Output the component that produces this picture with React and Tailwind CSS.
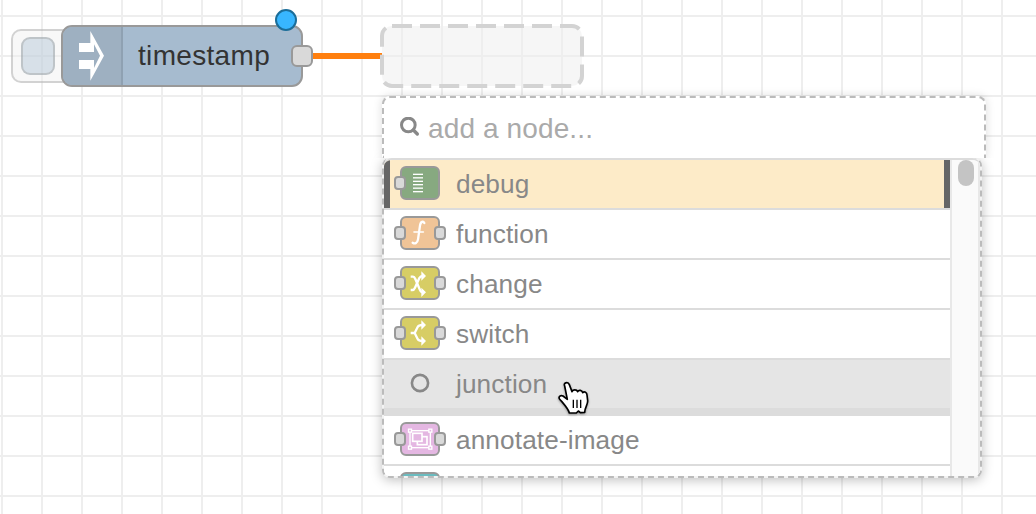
import React from "react";

const rows = [
  { id: "debug", label: "debug", color: "bg-[#87a980]", output: false, tone: "bg-[#fdebc8]", icon: "debug", selected: true },
  { id: "function", label: "function", color: "bg-[#f0c497]", output: true, tone: "bg-white", icon: "function" },
  { id: "change", label: "change", color: "bg-[#d7cd65]", output: true, tone: "bg-white", icon: "change" },
  { id: "switch", label: "switch", color: "bg-[#d7cd65]", output: true, tone: "bg-white", icon: "switch" },
  { id: "junction", label: "junction", tone: "bg-[#e5e5e5]", junction: true },
  { id: "annotate", label: "annotate-image", color: "bg-[#e4b7e2]", output: true, tone: "bg-white", icon: "annotate" },
  { id: "next", label: "", color: "bg-[#6bbcc0]", output: true, tone: "bg-white" },
];

const glyphs = {
  debug: (
    <g fill="#fff">
      {[41, 51.5, 62, 72, 82.5, 93].map((y) => (
        <rect key={y} x="69" y={y} width="30" height="4" />
      ))}
    </g>
  ),
  function: (
    <g fill="none" stroke="#fff" strokeLinecap="round">
      <path d="M103 39C100 33 92 33 90 47L84 88C82 101 74 102 68 98" strokeWidth="7" />
      <path d="M72 66H100" strokeWidth="5" />
    </g>
  ),
  change: (
    <g>
      <path d="M62 50H69Q73 50 76 57L90 90Q93 97 99 97" fill="none" stroke="#fff" strokeWidth="7" />
      <path d="M62 90H67Q72 90 75 83L88 54Q91 48 99 48" fill="none" stroke="#fff" strokeWidth="7" />
      <path d="M94 34L108 48L94 62ZM94 83L108 97L94 111Z" fill="#fff" />
    </g>
  ),
  switch: (
    <g>
      <path d="M62 69H75M74 69L83 51Q86 45 98 45M74 69L83 87Q86 93 98 93" fill="none" stroke="#fff" strokeWidth="7" />
      <path d="M94 31L108 45L94 59ZM94 79L108 93L94 107Z" fill="#fff" />
    </g>
  ),
  annotate: (
    <g fill="none" stroke="#fff" strokeWidth="4">
      <rect x="60" y="44" width="61" height="51" />
      <rect x="82" y="62" width="29" height="24" strokeWidth="5" />
      <rect x="68" y="52" width="28" height="24" strokeWidth="5" fill="#e4b7e2" />
      {[[60, 44], [121, 44], [60, 95], [121, 95]].map(([x, y]) => (
        <rect key={`${x}-${y}`} x={x - 4.5} y={y - 4.5} width="9" height="9" fill="#e4b7e2" />
      ))}
    </g>
  ),
};

function Port({ side }) {
  return (
    <span
      className={`absolute top-2 h-[14px] w-3 rounded-[4px] border-2 border-[#999] bg-[#d9d9d9] ${
        side === "left" ? "-left-2" : "-right-2"
      }`}
    />
  );
}

function PaletteNode({ row }) {
  return (
    <div className={`relative h-[34px] w-10 rounded-[6px] border-2 border-[#999] ${row.color}`}>
      {row.icon && (
        <svg className="absolute -left-0.5 -top-0.5 h-[34px] w-10" viewBox="30 18 120 102">
          {glyphs[row.icon]}
        </svg>
      )}
      <Port side="left" />
      {row.output && <Port side="right" />}
    </div>
  );
}

function Row({ row }) {
  return (
    <div
      className={`flex shrink-0 items-start border-[#dcdcdc] pt-[6px] ${row.tone} ${
        row.junction ? "h-14 border-b-8" : "h-[50px] border-b-2"
      }`}
    >
      <div className={`-mt-[6px] h-12 w-[6px] ${row.selected ? "bg-[#666]" : ""}`} />
      <div className="ml-[10px] flex h-[34px] w-10 items-center justify-center">
        {row.junction ? (
          <svg className="size-5" viewBox="0 0 20 20">
            <circle cx="10" cy="10" r="8.1" fill="none" stroke="#888" strokeWidth="2.6" />
          </svg>
        ) : (
          <PaletteNode row={row} />
        )}
      </div>
      <span className="ml-4 flex-1 whitespace-nowrap text-[26.2px] leading-[36px] tracking-[0.12px] text-[#888]">{row.label}</span>
      {row.selected && <div className="-mt-[6px] h-12 w-[6px] bg-[#666]" />}
    </div>
  );
}

function InjectNode() {
  return (
    <>
      <div className="absolute left-[11px] top-[29px] h-[54px] w-[70px] rounded-[10px] border-2 border-[#999]/40 bg-[#eee]/40 px-2 py-[6px]">
        <div className="h-[38px] w-[34px] rounded-[9px] border-2 border-[#999]/40 bg-[#a6bbcf]/40" />
      </div>
      <div className="absolute left-[61px] top-[25px] flex h-[62px] w-[242px] overflow-hidden rounded-[11px] border-2 border-[#999] bg-[#a6bbcf]">
        <div className="h-full w-[60px] shrink-0 border-r-2 border-[#8fa1b2] bg-[#9eb0c1]">
          <svg className="ml-[15px] mt-[3px] h-[52px] w-7" viewBox="234 90 84 156">
            <path
              fill="#fff"
              fillRule="evenodd"
              d="M237 129H271V93L312 167L271 242V207H237V180H282V204L300 167L282 133V156H237Z"
            />
          </svg>
        </div>
        <span className="ml-[15px] whitespace-nowrap text-[28px] leading-[58px] tracking-[0.32px] text-[#333]">timestamp</span>
      </div>
      <div className="absolute left-[291px] top-[45px] h-[22px] w-[22px] rounded-[6px] border-2 border-[#999] bg-[#d9d9d9]" />
      <div className="absolute left-[275px] top-[9px] size-[22px] rounded-full border-2 border-[#1b6d99] bg-[#38b6ff]" />
    </>
  );
}

export default function App() {
  return (
    <div
      className="relative h-[514px] w-[1036px] overflow-hidden bg-white bg-[linear-gradient(to_right,#eee_2px,transparent_2px),linear-gradient(to_bottom,#eee_2px,transparent_2px)] bg-[length:40px_40px] bg-[position:1px_15px] font-['Liberation_Sans',Arial,sans-serif]"
    >
      <div className="absolute left-[312px] top-[53px] h-[6px] w-[70px] bg-[#ff7f0e]" />
      <svg className="absolute left-[378px] top-[22px] h-[68px] w-[208px]" viewBox="378 22 208 68">
        <rect x="382" y="26" width="200" height="60" rx="10" fill="#eee" fillOpacity="0.5" />
        <rect x="382" y="26" width="200" height="60" rx="10" fill="none" stroke="#d3d3d3" strokeWidth="4" strokeDasharray="20 8" />
      </svg>
      <InjectNode />

      <div className="absolute left-[382px] top-[96px] flex w-[604px] flex-col">
        <div className="relative z-10 flex h-[62px] items-center rounded-t-[8px] border-2 border-b-0 border-dashed border-[#bbb] bg-white pl-4 shadow-[0_0_10px_rgba(0,0,0,0.14)] [clip-path:inset(-14px_-14px_0_-14px)]">
          <svg className="mb-0.5 size-5" viewBox="90 322 60 60">
            <circle cx="115" cy="346" r="20.5" fill="none" stroke="#888" strokeWidth="9" />
            <path d="M130 361L142 373" stroke="#888" strokeWidth="10" strokeLinecap="round" />
          </svg>
          <span className="ml-2 mt-0.5 whitespace-nowrap text-[28px] leading-[60px] tracking-[0.12px] text-[#aaa]">add a node...</span>
        </div>
        <div className="h-80 w-[600px] rounded-[8px] border-2 border-t-0 border-dashed border-[#bbb] bg-[#f3f3f3] shadow-[0_2px_12px_rgba(0,0,0,0.26)]">
          <div className="flex h-[318px] overflow-hidden rounded-t-[8px] rounded-b-[6px] border-t-2 border-[#dcdcdc] bg-white">
            <div className="flex w-[566px] flex-col">
              {rows.map((row) => (
                <Row key={row.id} row={row} />
              ))}
            </div>
            <div className="flex w-[30px] justify-end border-x-2 border-[#e8e8e8] bg-[#fafafa] pr-1">
              <div className="h-[26px] w-4 rounded-full bg-[#c4c4c4]" />
            </div>
          </div>
        </div>
      </div>

      <svg
        className="absolute left-[556px] top-[380px] size-9 drop-shadow-[0_1px_1px_rgba(0,0,0,0.35)]"
        viewBox="540 90 108 108"
      >
        <path
          d="M566 108C561 98 576 94 580 104L588 125C591 118 602 118 605 125C608 119 618 120 620 128C625 123 633 127 633 135L635 152C636 164 627 170 626 187L613 188L607 183L601 189L580 189C577 176 567 166 550 146C547 140 554 134 561 138L574 148Z"
          fill="#fff"
          stroke="#000"
          strokeWidth="5"
          strokeLinejoin="round"
        />
        <path d="M592 149V174M603 149V174M614 149V174" stroke="#000" strokeWidth="4" />
      </svg>
    </div>
  );
}
